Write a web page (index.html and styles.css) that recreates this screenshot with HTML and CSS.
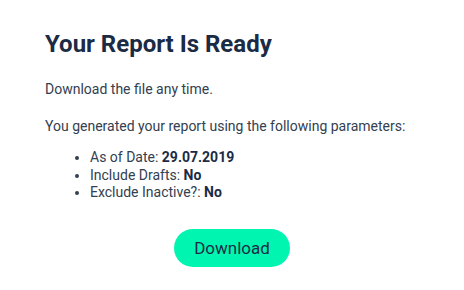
FILE: index.html
```html
<!DOCTYPE html>
<html lang="en">
<head>
  <meta charset="UTF-8">
  <title>Your Report Is Ready</title>
  <link rel="stylesheet" href="styles.css">
</head>
<body>

<div class="mail">
  <h1>Your Report Is Ready</h1>
  <p class="lead">Download the file any time.</p>
  <p class="intro">You generated your report using the following parameters:</p>
  <ul class="params">
    <li>As of Date: <b>29.07.2019</b></li>
    <li>Include Drafts: <b>No</b></li>
    <li>Exclude Inactive?: <b>No</b></li>
  </ul>
  <div class="actions">
    <a class="btn" href="#">Download</a>
  </div>
</div>

</body>
</html>
```

FILE: styles.css
```css
body {
  margin: 0;
  background-color: #fff;
  font-family: Roboto, "Liberation Sans", sans-serif;
  color: #33404f;
}

.mail {
  padding: 30px 45px;
}

h1 {
  font-size: 24px;
  font-weight: 700;
  color: #1b2b45;
  margin: 0 0 21px;
  line-height: 28px;
}

p {
  font-size: 14px;
  line-height: 20px;
  margin: 0;
}

.lead {
  margin-bottom: 17px;
}

.intro {
  margin-bottom: 13px;
}

.params {
  font-size: 14px;
  line-height: 17.5px;
  margin: 0 0 27px;
  padding-left: 45px;
}

.params b {
  color: #1b2b45;
}

.actions {
  text-align: center;
}

.btn {
  display: inline-block;
  padding: 0 20px;
  height: 38px;
  line-height: 38px;
  border-radius: 19px;
  background-color: #00f5b0;
  color: #1b2b45;
  font-size: 17px;
  text-decoration: none;
}
```
